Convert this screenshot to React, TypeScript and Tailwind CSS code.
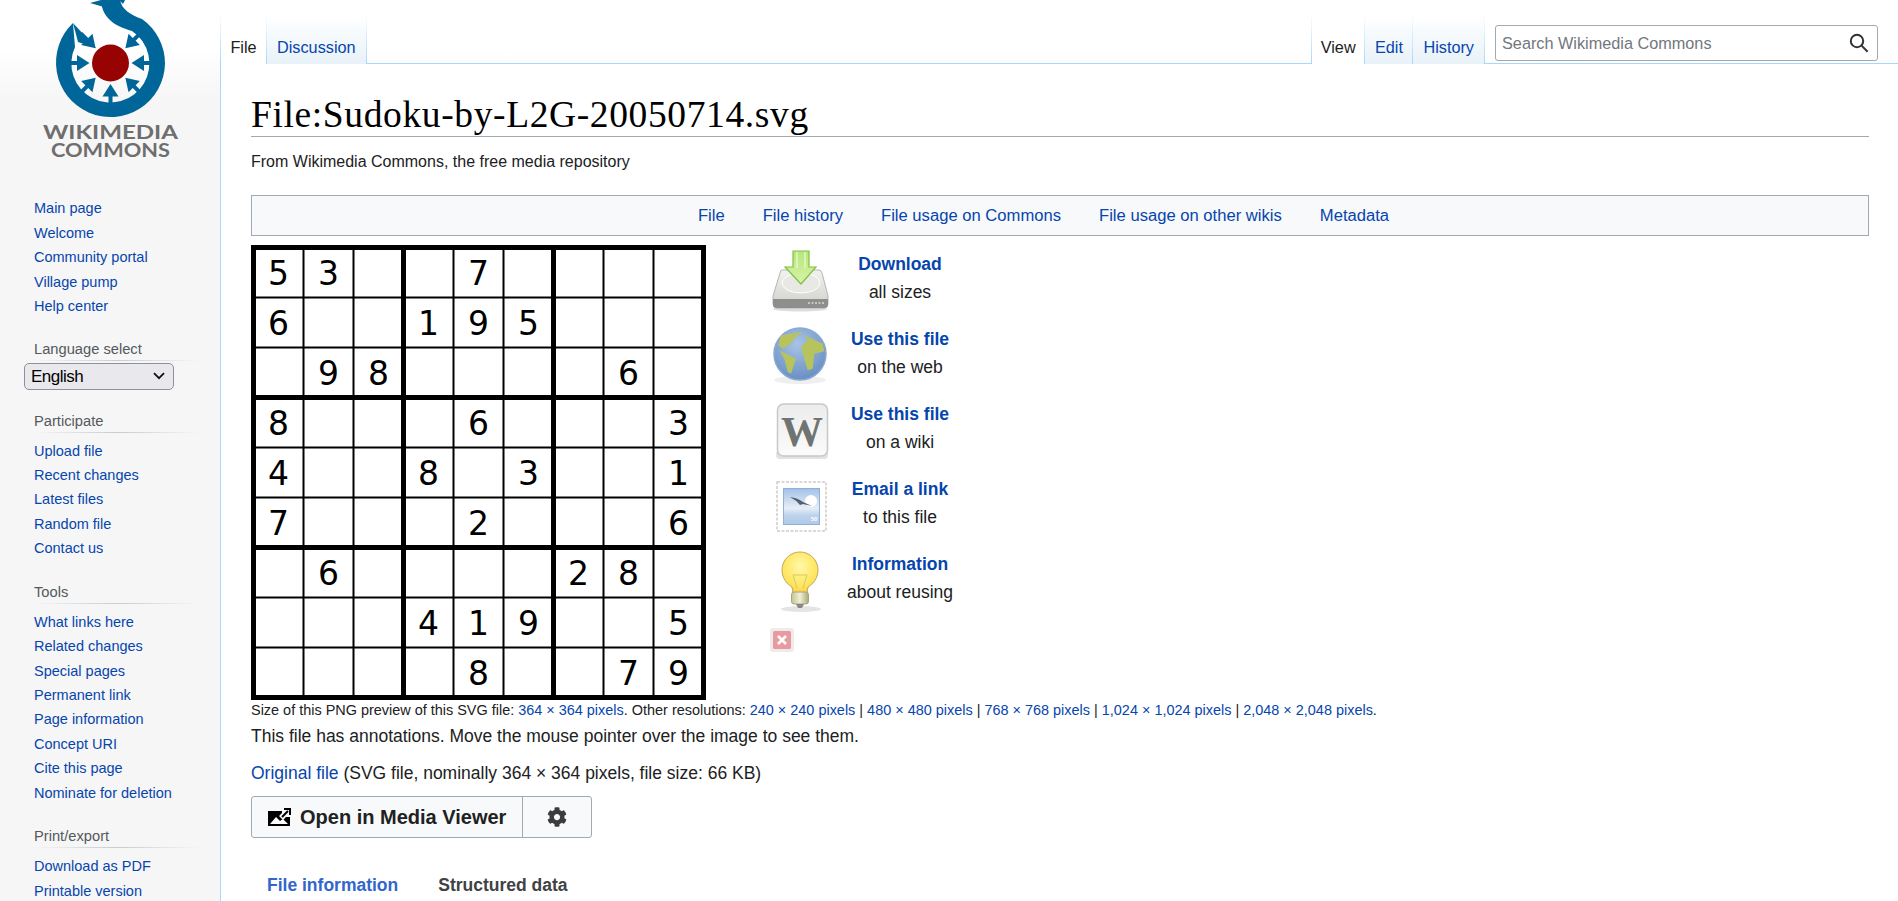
import { FaCog } from "react-icons/fa";

const BOARD = [
  "53..7....",
  "6..195...",
  ".98....6.",
  "8...6...3",
  "4..8.3..1",
  "7...2...6",
  ".6....28.",
  "...419..5",
  "....8..79",
];

const sections = [
  { title: "Participate", links: ["Upload file", "Recent changes", "Latest files", "Random file", "Contact us"] },
  {
    title: "Tools",
    links: [
      "What links here",
      "Related changes",
      "Special pages",
      "Permanent link",
      "Page information",
      "Concept URI",
      "Cite this page",
      "Nominate for deletion",
    ],
  },
  { title: "Print/export", links: ["Download as PDF", "Printable version"] },
];

function CommonsLogo() {
  const angles = [-45, 0, 45, 90, 135, 180, 225];
  return (
    <svg width="220" height="176" viewBox="0 0 220 176" className="block">
      {/* ring + tail */}
      <path
        d="M73 23 A54.5 54.5 0 1 0 165 63.5 A54.5 54.5 0 0 0 142 19 C131 15 122 10 120 0 L101 0 C102 20 118 27 132 31 A39 39 0 1 1 75 47 Z"
        fill="#069"
      />
      <path d="M90 3 L101 0 L104 7 Z M119 0 L125 0 L123 4 Z" fill="#069" />
      <circle cx="110.5" cy="63" r="18.5" fill="#970302" />
      {angles.map((a) => (
        <g key={a} transform={`translate(110.5 63) rotate(${a})`}>
          <path d="M21 0 L33.500 -8 L33.500 -2 L42 -2 L42 2 L33.500 2 L33.500 8 Z" fill="#069" />
        </g>
      ))}
      <path d="M73 23 L96 48 L78 42 Z" fill="#069" />
      <text x="43" y="139" textLength="135" lengthAdjust="spacingAndGlyphs" fill="#6e6e6e" fontSize="19" fontWeight="700" className="[font-family:'Lato',sans-serif]">
        WIKIMEDIA
      </text>
      <text x="51" y="157" textLength="119" lengthAdjust="spacingAndGlyphs" fill="#6e6e6e" fontSize="19" fontWeight="700" className="[font-family:'Lato',sans-serif]">
        COMMONS
      </text>
    </svg>
  );
}

function Heading({ children }: { children: string }) {
  return (
    <div className="relative h-[24px] pl-[34px] text-[14.7px] leading-[24px] text-[#54595d]">
      {children}
      <div className="absolute bottom-0 left-[34px] h-px w-[166px] bg-gradient-to-r from-[#f6f6f6] via-[#c8ccd1] to-[#f6f6f6]" />
    </div>
  );
}

function Sidebar() {
  const main = ["Main page", "Welcome", "Community portal", "Village pump", "Help center"];
  return (
    <aside className="w-[220px] shrink-0">
      <CommonsLogo />
      <ul className="mt-[20px]">
        {main.map((l) => (
          <li key={l} className="h-[24.5px] pl-[34px] text-[14.5px] leading-[24.5px] text-[#0645ad]">
            {l}
          </li>
        ))}
      </ul>
      <div className="mt-[18px]">
        <Heading>Language select</Heading>
        <div className="ml-[24px] mt-[2px] flex h-[27px] w-[150px] items-center justify-between rounded-[5px] border border-[#8f8f9d] bg-[#e9e9ed] pl-[6px] pr-[8px] text-[17px] tracking-[-0.5px] text-black">
          <span className="pt-[2px]">English</span>
          <svg width="12" height="8" viewBox="0 0 12 8" fill="none" stroke="#111" strokeWidth="1.8">
            <path d="M1 1.2 L6 6.2 L11 1.2" />
          </svg>
        </div>
      </div>
      {sections.map((s) => (
        <div key={s.title} className="mt-[19px]">
          <Heading>{s.title}</Heading>
          <ul className="mt-[6px]">
            {s.links.map((l) => (
              <li key={l} className="h-[24.45px] pl-[34px] text-[14.5px] leading-[24.45px] text-[#0645ad]">
                {l}
              </li>
            ))}
          </ul>
        </div>
      ))}
    </aside>
  );
}

function Sep() {
  return <span className="h-[50px] w-px shrink-0 bg-gradient-to-b from-white to-[#a7d7f9]" />;
}

function Tab({ label, active, width }: { label: string; active?: boolean; width?: string }) {
  return (
    <>
      <div
        className={
          (active
            ? "flex h-[49px] items-center justify-center bg-white pt-[16px] text-[16.25px] text-[#202122] "
            : "flex h-[49px] items-center justify-center bg-gradient-to-b from-white to-[#e8f2f8] pt-[16px] text-[16.25px] text-[#0645ad] ") +
          (width ?? "px-[10px]")
        }
      >
        {label}
      </div>
      <Sep />
    </>
  );
}

function TopBar() {
  return (
    <div className="flex h-[64px] shrink-0 items-end justify-between border-b border-[#a7d7f9]">
      <div className="-mb-px flex items-end">
        <Sep />
        <Tab label="File" active width="w-[45px]" />
        <Tab label="Discussion" />
      </div>
      <div className="-mb-px flex items-end">
        <Sep />
        <Tab label="View" active width="w-[52.5px]" />
        <Tab label="Edit" width="w-[47px]" />
        <Tab label="History" />
        <div className="mb-[3px] ml-[10px] mr-[20px] flex h-[36px] w-[383px] items-center justify-between rounded-[3px] border border-[#a2a9b1] bg-white/50 pl-[6px] pr-[8px] text-[16.25px] text-[#72777d]">
          Search Wikimedia Commons
          <svg width="20" height="20" viewBox="0 0 20 20" fill="none" stroke="#303234" strokeWidth="2">
            <circle cx="8" cy="8" r="6.2" />
            <path d="M12.6 12.6 L18.6 18.8" />
          </svg>
        </div>
      </div>
    </div>
  );
}

function Sudoku() {
  const lines = Array.from({ length: 10 }, (_, i) => i);
  return (
    <svg width="455" height="455" viewBox="0 0 455 455" className="mt-[4px] block shrink-0 bg-white">
      {lines.map((i) => {
        const thick = i % 3 === 0;
        const p = 50 * i + 2.5;
        return (
          <g key={i} stroke="#000" strokeWidth={thick ? 5 : 2}>
            <line x1={p} y1="0" x2={p} y2="455" />
            <line x1="0" y1={p} x2="455" y2={p} />
          </g>
        );
      })}
      {BOARD.map((row, r) =>
        row.split("").map((d, c) =>
          d === "." ? null : (
            <text
              key={`${r}-${c}`}
              x={27.5 + 50 * c}
              y={40 + 50 * r}
              textAnchor="middle"
              fontSize="33"
              fill="#000"
              className="[font-family:'DejaVu_Sans',sans-serif]"
            >
              {d}
            </text>
          ),
        ),
      )}
    </svg>
  );
}

function DiskIcon() {
  return (
    <svg width="60" height="64" viewBox="0 0 60 64">
      <defs>
        <linearGradient id="disk" x1="0" y1="0" x2="0" y2="1">
          <stop offset="0" stopColor="#f2f2f0" />
          <stop offset="1" stopColor="#cfcfcb" />
        </linearGradient>
        <linearGradient id="arrow" x1="0" y1="0" x2="0" y2="1">
          <stop offset="0" stopColor="#b7e67c" />
          <stop offset="1" stopColor="#d8f3a8" />
        </linearGradient>
      </defs>
      <ellipse cx="30" cy="60" rx="27" ry="2.5" fill="#ddd" />
      <path d="M12 21 L49 21 Q51 21 52 24 L58 47 L58 55 Q58 59 54 59 L7 59 Q3 59 3 55 L3 47 L10 24 Q10.500 21 12 21 Z" fill="url(#disk)" stroke="#b5b5b2" />
      <path d="M3 50 L58 50 L58 55 Q58 59 54 59 L7 59 Q3 59 3 55 Z" fill="#8d8f8c" />
      <path d="M38 54 H54" stroke="#c5c5c2" strokeWidth="2" strokeDasharray="2 1.500" />
      <ellipse cx="31" cy="34" rx="19" ry="10" fill="#e8e8e5" stroke="#fff" />
      <path d="M23 2 H39 V18 H46 L31 35 L15 18 H23 Z" fill="url(#arrow)" stroke="#83c142" strokeWidth="1.2" />
      <path d="M27 3 V19 M35 3 V19" stroke="#e6f8c4" strokeWidth="2" opacity="0.7" />
    </svg>
  );
}

function GlobeIcon() {
  return (
    <svg width="60" height="64" viewBox="0 0 60 64">
      <defs>
        <radialGradient id="sea" cx="0.45" cy="0.3" r="0.8">
          <stop offset="0" stopColor="#a9c3e6" />
          <stop offset="1" stopColor="#5f88bd" />
        </radialGradient>
      </defs>
      <ellipse cx="30" cy="56" rx="26" ry="4" fill="#efefef" />
      <g transform="translate(0 1)">
        <circle cx="30" cy="29" r="26" fill="url(#sea)" stroke="#8ba9d2" strokeWidth="1.500" />
        <g fill="#b7c45e">
          <path d="M11 10.300 L32.700 7 L24 13.700 L21 18.700 L12.700 23.700 L8.300 20.300 Z" />
          <path d="M9.300 25.300 L26 33.700 L21 48.700 L17.700 47 L14.300 33.700 Z" />
          <path d="M34.300 10.300 L52.700 18.700 L54.300 26.300 L44.300 28.700 L42.700 43.700 L37.700 45.300 L32.700 28.700 L31 22 L37.700 15.300 Z" />
        </g>
      </g>
    </svg>
  );
}

function WikiIcon() {
  return (
    <svg width="60" height="64" viewBox="0 0 60 64">
      <defs>
        <linearGradient id="tile" x1="0" y1="0" x2="0" y2="1">
          <stop offset="0" stopColor="#ececec" />
          <stop offset="1" stopColor="#fbfbfb" />
        </linearGradient>
      </defs>
      <rect x="6" y="51" width="52" height="9" rx="4" fill="#e2e2e2" />
      <rect x="7.500" y="5" width="50" height="52" rx="6" fill="url(#tile)" stroke="#c8c8c8" strokeWidth="1.500" />
      <text x="32" y="47" textAnchor="middle" fontSize="42" fontWeight="700" fill="#6f7371" className="[font-family:'Liberation_Serif',serif]">
        W
      </text>
    </svg>
  );
}

function StampIcon() {
  return (
    <svg width="60" height="64" viewBox="0 0 60 64">
      <defs>
        <linearGradient id="sky" x1="0" y1="0" x2="0" y2="1">
          <stop offset="0" stopColor="#a3c1e6" />
          <stop offset="0.55" stopColor="#e6eef8" />
          <stop offset="0.75" stopColor="#bcd2ec" />
          <stop offset="1" stopColor="#b0c9e8" />
        </linearGradient>
      </defs>
      <rect x="7" y="8" width="49" height="49" fill="#fff" stroke="#cdcdcd" strokeWidth="1.500" strokeDasharray="3 1.500" />
      <rect x="13.500" y="14.500" width="36" height="36" fill="url(#sky)" stroke="#8fb0da" />
      <circle cx="41" cy="27" r="6" fill="#fff" />
      <path d="M20 23 Q28 24 33 28 L42 32 L33 30 L30 31 Q26 26 20 23 Z" fill="#55606c" />
      <text x="44" y="47" textAnchor="middle" fontSize="6" fontWeight="700" fill="#fff" className="[font-family:'Liberation_Sans',sans-serif]">
        50
      </text>
    </svg>
  );
}

function BulbIcon() {
  return (
    <svg width="60" height="64" viewBox="0 0 60 64">
      <defs>
        <radialGradient id="bulb" cx="0.5" cy="0.35" r="0.7">
          <stop offset="0" stopColor="#fff9a8" />
          <stop offset="0.7" stopColor="#ffe45c" />
          <stop offset="1" stopColor="#f6c93c" />
        </radialGradient>
        <linearGradient id="screw" x1="0" y1="0" x2="1" y2="0">
          <stop offset="0" stopColor="#c5c58e" />
          <stop offset="0.5" stopColor="#f0f0d8" />
          <stop offset="1" stopColor="#aaa97a" />
        </linearGradient>
      </defs>
      <ellipse cx="31" cy="60" rx="20" ry="3" fill="#e4e4e4" />
      <path d="M22 38 C14 33 12 26 12 21 A18 18 0 0 1 48 21 C48 26 46 33 38 38 L37 44 L23 44 Z" fill="url(#bulb)" stroke="#c2a85c" />
      <path d="M23 26 L27 39 M37 26 L33 39 M23 26 L37 26" stroke="#d8c76a" fill="none" />
      <rect x="21.500" y="43" width="17" height="12" rx="2.500" fill="url(#screw)" stroke="#a8a67c" />
      <path d="M26 55 H34 L32 59 H28 Z" fill="#888" />
    </svg>
  );
}

const actions = [
  { icon: <DiskIcon />, title: "Download", sub: "all sizes" },
  { icon: <GlobeIcon />, title: "Use this file", sub: "on the web" },
  { icon: <WikiIcon />, title: "Use this file", sub: "on a wiki" },
  { icon: <StampIcon />, title: "Email a link", sub: "to this file" },
  { icon: <BulbIcon />, title: "Information", sub: "about reusing" },
];

function Actions() {
  return (
    <div className="ml-[64px] flex flex-col">
      {actions.map((a, i) => (
        <div key={i} className="flex h-[75px] items-center">
          <div className="w-[60px] pt-[5px]">{a.icon}</div>
          <div className="w-[140px] text-center text-[17.5px] leading-[27.5px]">
            <div className="font-bold text-[#0645ad]">{a.title}</div>
            <div>{a.sub}</div>
          </div>
        </div>
      ))}
      <svg width="24" height="24" viewBox="0 0 24 24" className="mt-[12px]">
        <rect x="0" y="0" width="24" height="24" rx="3" fill="#ececec" />
        <rect x="3" y="3" width="18" height="18" rx="1.500" fill="#ea9a9f" />
        <path d="M8 8 L16 16 M16 8 L8 16" stroke="#fff" strokeWidth="2.600" />
      </svg>
    </div>
  );
}

function MediaViewerIcon() {
  return (
    <svg width="23" height="19" viewBox="0 0 23 19">
      <path d="M0 3 H14 V5 L11 8 L15 12 L18 9 H22 V18 H0 Z" fill="#000" />
      <path d="M2 16 L8 9 L12 13 L15 11 L20 16 Z" fill="#fff" />
      <path d="M14 9 L20 3 M16 1 H22 V7" stroke="#000" strokeWidth="2" fill="none" />
    </svg>
  );
}

function Content() {
  return (
    <main className="min-h-0 flex-1 overflow-hidden border-l border-[#a7d7f9] bg-white pl-[30px] pr-[29px]">
      <h1 className="flex h-[73px] items-end border-b border-[#a2a9b1] text-[37.5px] leading-[43px] tracking-[0.62px] text-black [font-family:'Liberation_Serif',serif]">
        File:Sudoku-by-L2G-20050714.svg
      </h1>
      <p className="mt-[15px] text-[16px] leading-[20px]">From Wikimedia Commons, the free media repository</p>
      <nav className="mt-[23px] flex h-[41px] items-center justify-center gap-[38px] border border-[#a2a9b1] bg-[#f8f9fa] pr-[33px] pt-[1px] text-[16.625px] text-[#0645ad]">
        <span>File</span>
        <span>File history</span>
        <span>File usage on Commons</span>
        <span>File usage on other wikis</span>
        <span>Metadata</span>
      </nav>
      <div className="mt-[5px] flex items-start">
        <Sudoku />
        <Actions />
      </div>
      <p className="mt-0 text-[14.45px] leading-[20px]">
        Size of this PNG preview of this SVG file: <span className="text-[#0645ad]">364 × 364 pixels</span>. Other resolutions:{" "}
        <span className="text-[#0645ad]">240 × 240 pixels</span> | <span className="text-[#0645ad]">480 × 480 pixels</span> |{" "}
        <span className="text-[#0645ad]">768 × 768 pixels</span> | <span className="text-[#0645ad]">1,024 × 1,024 pixels</span> |{" "}
        <span className="text-[#0645ad]">2,048 × 2,048 pixels</span>.
      </p>
      <p className="mt-[3px] text-[17.5px] leading-[26px]">This file has annotations. Move the mouse pointer over the image to see them.</p>
      <p className="mt-[11px] text-[17.5px] leading-[26px]">
        <span className="text-[#0645ad]">Original file</span> (SVG file, nominally 364 × 364 pixels, file size: 66 KB)
      </p>
      <div className="mt-[10px] flex h-[42px] w-[341px] rounded-[3px] border border-[#a2a9b1] bg-[#f8f9fa] text-[#202122]">
        <div className="flex w-[271px] items-center gap-[9px] border-r border-[#a2a9b1] pl-[16px] text-[20px] font-bold">
          <MediaViewerIcon />
          Open in Media Viewer
        </div>
        <div className="flex flex-1 items-center justify-center text-[#3a3c3e]">
          <FaCog size={20} />
        </div>
      </div>
      <div className="mt-[34px] flex gap-[40px] pl-[16px] text-[17.5px] font-bold leading-[26px]">
        <span className="text-[#36c]">File information</span>
        <span className="text-[#404244]">Structured data</span>
      </div>
    </main>
  );
}

export default function App() {
  return (
    <div className="flex h-screen w-full overflow-hidden bg-[#f6f6f6] bg-[linear-gradient(#fff_50%,#f6f6f6_100%)] bg-[length:100%_100px] bg-no-repeat text-[#202122] [font-family:'Liberation_Sans',Arial,sans-serif]">
      <Sidebar />
      <div className="flex min-w-0 flex-1 flex-col">
        <TopBar />
        <Content />
      </div>
    </div>
  );
}
